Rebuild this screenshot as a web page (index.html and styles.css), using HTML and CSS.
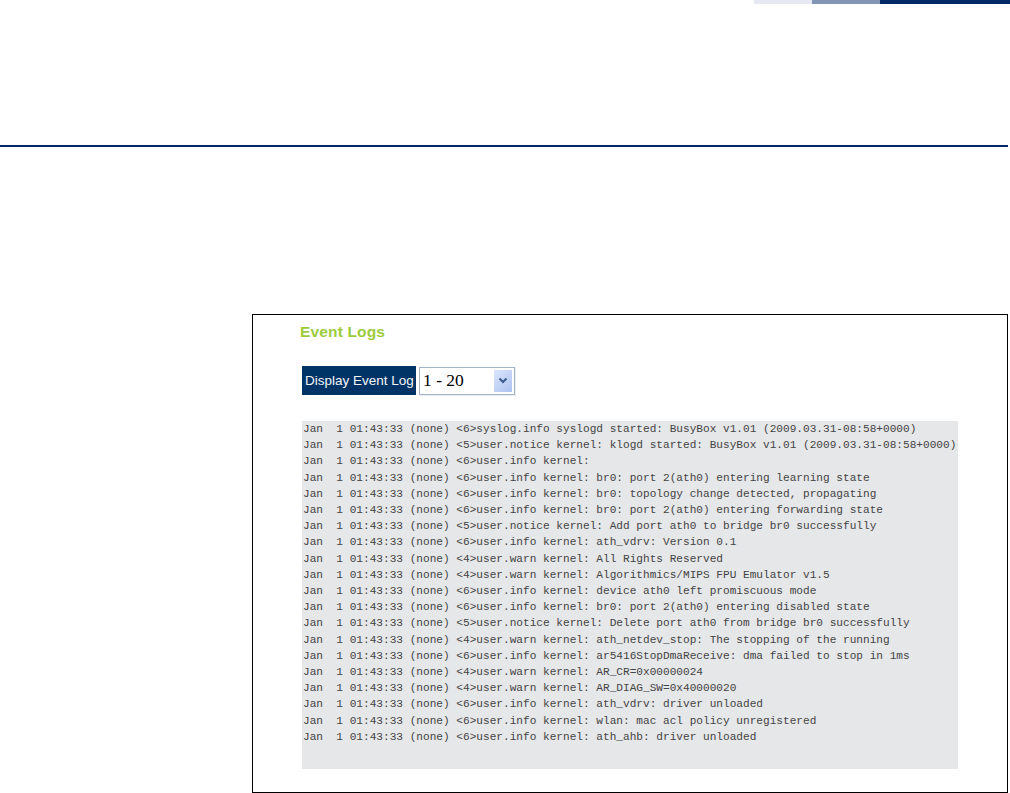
FILE: index.html
```html
<!DOCTYPE html>
<html lang="en">
<head>
<meta charset="utf-8">
<title>Event Logs</title>
<link rel="stylesheet" href="styles.css">
</head>
<body>
<header class="tabs">
  <span class="tab tab-light"></span>
  <span class="tab tab-mid"></span>
  <span class="tab tab-dark"></span>
</header>
<hr class="rule">
<main class="card">
  <h1 class="title">Event Logs</h1>
  <div class="filter">
    <span class="filter-label">Display Event Log</span>
    <div class="select">
      <span class="select-value">1 - 20</span>
      <span class="select-btn">
        <svg width="10" height="7" viewBox="0 0 10 7"><path d="M1.5 1.5 L5 5 L8.5 1.5" fill="none" stroke="#3d5a8c" stroke-width="2"/></svg>
      </span>
    </div>
  </div>
  <pre class="log">Jan  1 01:43:33 (none) &lt;6&gt;syslog.info syslogd started: BusyBox v1.01 (2009.03.31-08:58+0000)
Jan  1 01:43:33 (none) &lt;5&gt;user.notice kernel: klogd started: BusyBox v1.01 (2009.03.31-08:58+0000)
Jan  1 01:43:33 (none) &lt;6&gt;user.info kernel:
Jan  1 01:43:33 (none) &lt;6&gt;user.info kernel: br0: port 2(ath0) entering learning state
Jan  1 01:43:33 (none) &lt;6&gt;user.info kernel: br0: topology change detected, propagating
Jan  1 01:43:33 (none) &lt;6&gt;user.info kernel: br0: port 2(ath0) entering forwarding state
Jan  1 01:43:33 (none) &lt;5&gt;user.notice kernel: Add port ath0 to bridge br0 successfully
Jan  1 01:43:33 (none) &lt;6&gt;user.info kernel: ath_vdrv: Version 0.1
Jan  1 01:43:33 (none) &lt;4&gt;user.warn kernel: All Rights Reserved
Jan  1 01:43:33 (none) &lt;4&gt;user.warn kernel: Algorithmics/MIPS FPU Emulator v1.5
Jan  1 01:43:33 (none) &lt;6&gt;user.info kernel: device ath0 left promiscuous mode
Jan  1 01:43:33 (none) &lt;6&gt;user.info kernel: br0: port 2(ath0) entering disabled state
Jan  1 01:43:33 (none) &lt;5&gt;user.notice kernel: Delete port ath0 from bridge br0 successfully
Jan  1 01:43:33 (none) &lt;4&gt;user.warn kernel: ath_netdev_stop: The stopping of the running
Jan  1 01:43:33 (none) &lt;6&gt;user.info kernel: ar5416StopDmaReceive: dma failed to stop in 1ms
Jan  1 01:43:33 (none) &lt;4&gt;user.warn kernel: AR_CR=0x00000024
Jan  1 01:43:33 (none) &lt;4&gt;user.warn kernel: AR_DIAG_SW=0x40000020
Jan  1 01:43:33 (none) &lt;6&gt;user.info kernel: ath_vdrv: driver unloaded
Jan  1 01:43:33 (none) &lt;6&gt;user.info kernel: wlan: mac acl policy unregistered
Jan  1 01:43:33 (none) &lt;6&gt;user.info kernel: ath_ahb: driver unloaded</pre>
</main>
</body>
</html>
```
FILE: styles.css
```css
* { box-sizing: border-box; }
html, body { margin: 0; padding: 0; background: #fff; }
body { width: 1010px; height: 793px; overflow: hidden; font-family: "Liberation Sans", Arial, sans-serif; }

.tabs { display: flex; justify-content: flex-end; height: 4px; }
.tab { display: block; height: 4px; }
.tab-light { width: 58px; background: #e6e9f1; }
.tab-mid { width: 68px; background: #8295b6; }
.tab-dark { width: 130px; background: #002868; }

.rule { height: 2px; width: 1008px; margin: 141px 0 0; border: 0; background: #002868; }

.card {
  width: 756px;
  height: 479px;
  margin: 167px 0 0 252px;
  padding: 8px 49px 0 47px;
  border: 1px solid #000;
}

.title { margin: 0; font-size: 15.5px; line-height: 18px; font-weight: 700; letter-spacing: 0.15px; color: #9ccb3b; }

.filter { display: flex; align-items: center; gap: 3px; margin: 25px 0 0 2px; }
.filter-label {
  width: 114px; height: 29px; line-height: 29px; padding-left: 3px;
  background: #003366; color: #f4f6fa; font-size: 13.5px; font-weight: 400; white-space: nowrap;
}
.select {
  width: 96px; height: 28px; display: flex; align-items: center; justify-content: space-between;
  padding: 2px 2px 2px 3px; border: 1px solid #a5b3c9; box-shadow: 1px 1px 0 #e8ecf3; background: #fff;
}
.select-value { font-family: "Liberation Serif", serif; font-size: 17.5px; color: #000; }
.select-btn {
  width: 18px; height: 22px; display: flex; align-items: center; justify-content: center;
  background: linear-gradient(135deg, #dbe5fb, #adc3f2);
}

.log {
  width: 656px; height: 348px; margin: 26px 0 0 2px; padding: 0 0 0 1px; overflow: hidden;
  background: #e6e7e9; color: #444;
  font-family: "Liberation Mono", monospace; font-size: 11.12px; line-height: 16.2px;
}
```
